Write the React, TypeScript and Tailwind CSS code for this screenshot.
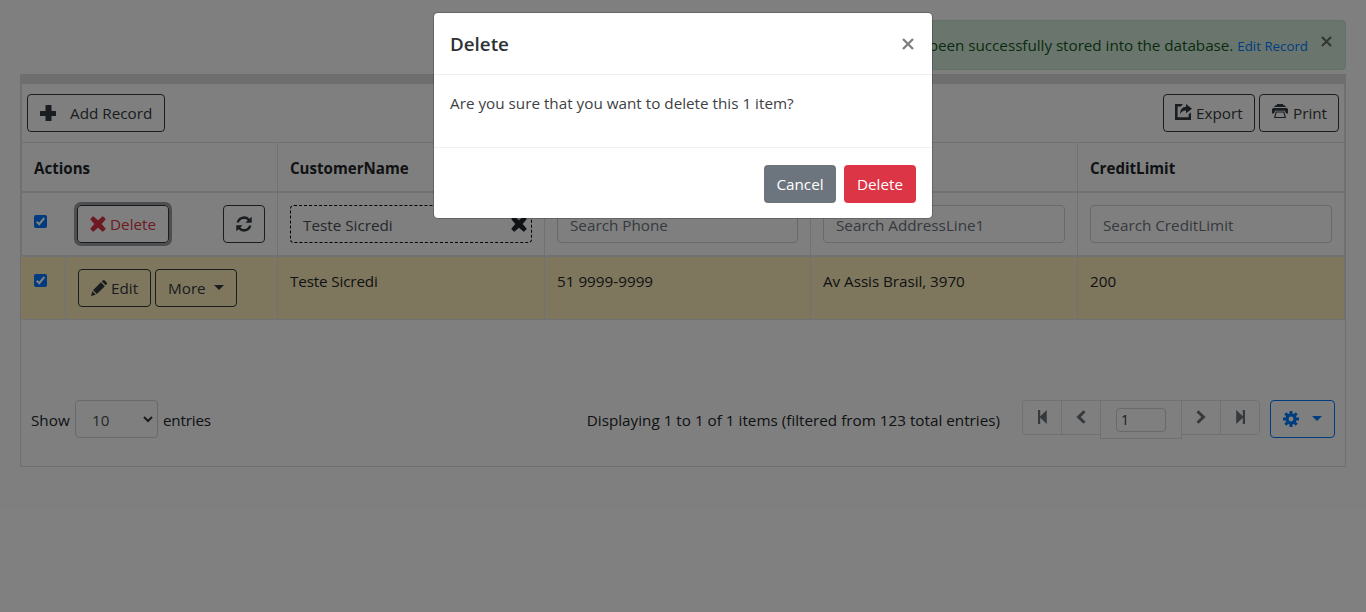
import React from "react";

type IconProps = { className?: string };

const PlusIcon = ({ className = "" }: IconProps) => (
  <svg viewBox="0 0 16 16" className={"size-4 shrink-0 " + className} fill="currentColor">
    <path d="M6 0h5a.5.5 0 0 1 .5.5V6H15.500a.5.5 0 0 1 .5.5v4a.5.5 0 0 1-.5.5H11.500v4.500a.5.5 0 0 1-.5.5H6a.5.5 0 0 1-.5-.5V11H.5a.5.5 0 0 1-.5-.5v-4A.5.5 0 0 1 .5 6h5V.5A.5.5 0 0 1 6 0z" />
  </svg>
);
const RemoveIcon = ({ className = "" }: IconProps) => (
  <svg viewBox="0 0 16 16" className={"size-4 shrink-0 " + className} fill="currentColor">
    <path d="M3.600.5 8 4.300 12.400.5q.4-.4.8 0l2.300 2.300q.4.4 0 .8L11.700 8l3.800 4.400q.4.4 0 .8l-2.300 2.300q-.4.4-.8 0L8 11.700l-4.400 3.800q-.4.4-.8 0L.5 13.200q-.4-.4 0-.8L4.300 8 .5 3.600q-.4-.4 0-.8L2.800.5q.4-.4.8 0z" />
  </svg>
);
const RefreshIcon = () => (
  <svg viewBox="0 0 16 16" className="size-4 shrink-0" fill="currentColor">
    <path d="M.6 6.500A7.600 7.600 0 0 1 13.500 2.700L15.700.8V6.700H9.400l2.300-2.300A5.300 5.300 0 0 0 3 6.500z" />
    <path d="M15.400 9.500A7.600 7.600 0 0 1 2.500 13.300L.3 15.200V9.300h6.300l-2.300 2.300A5.300 5.300 0 0 0 13 9.500z" />
  </svg>
);
const PencilIcon = () => (
  <svg viewBox="0 0 16 16" className="size-4 shrink-0" fill="currentColor">
    <path d="M0 16l1.300-4.700 3.500 3.500zM2 10.200 9.900 2.300l3.900 3.900-7.900 7.900zM10.800 1.500l1-1q.9-.9 1.900 0l2 2q.8.900 0 1.800l-1 1z" />
  </svg>
);
const ExportIcon = () => (
  <svg viewBox="0 0 17 16" className="h-4 w-[17px] shrink-0" fill="currentColor">
    <path d="M0 0h8L5.800 2.600H2.600v10.700h11V10.400L16 8.300V16H0z" />
    <path d="M11 0l6 4.700-6 4.600V6.500C8.200 6.400 6.300 7.500 5 10.200 5.200 5.600 7.300 3 11 2.800z" />
  </svg>
);
const PrintIcon = () => (
  <svg viewBox="0 0 16 16" className="size-4 shrink-0" fill="currentColor">
    <path d="M5 0h6l.6 1.500h1.400L14 3H2l1-1.500h1.400z" />
    <path d="M1.500 4h13q1.500 0 1.500 1.500V9.500h-1.900L12.900 6.700H3.100L1.900 9.500H0V5.500Q0 4 1.500 4z" />
    <path d="M3.700 7.500h8.600l1.700 6.500H2zM4.600 8.500l-1.200 4.400h9.200l-1.200-4.400z" fillRule="evenodd" />
  </svg>
);
const CogIcon = () => (
  <svg viewBox="0 0 16 16" className="size-4 shrink-0">
    <g stroke="currentColor" strokeWidth="3">
      <path d="M8 0v16M0 8h16M2.300 2.300l11.400 11.400M2.300 13.700 13.700 2.300" />
    </g>
    <circle cx="8" cy="8" r="5.700" fill="currentColor" />
    <circle cx="8" cy="8" r="2.400" fill="#fff" />
  </svg>
);
const StepIcon = ({ className = "" }: IconProps) => (
  <svg viewBox="0 0 9 14" className={"mb-0.5 h-3.5 w-[9px] " + className} fill="currentColor">
    <path d="M0 0h2.200v6.200L8.800 0v14L2.200 7.800V14H0z" />
  </svg>
);
const ChevronIcon = ({ className = "" }: IconProps) => (
  <svg viewBox="0 0 10 14" className={"mb-0.5 h-3.5 w-2.5 " + className} fill="none" stroke="currentColor" strokeWidth="3">
    <path d="M8.500 1.200 2.600 7l5.900 5.800" />
  </svg>
);
const Caret = ({ className = "" }: IconProps) => (
  <span className={"inline-block border-x-[5px] border-t-[5px] border-x-transparent border-t-current " + className} />
);

const btn =
  "flex h-[38px] shrink-0 items-center rounded-[4px] border border-[#343a40] text-[#343a40] whitespace-nowrap";
const cell = "border-r border-[#dee2e6]";
const columns = "grid grid-cols-[257px_267px_266px_267px_267px]";

const Check = () => (
  <span className="flex size-[13px] shrink-0 items-center justify-center rounded-[2px] bg-[#0075ff]">
    <svg viewBox="0 0 13 13" className="size-[13px]" fill="none" stroke="#fff" strokeWidth="2">
      <path d="M2.700 6.700 5.200 9.200 10.300 3" />
    </svg>
  </span>
);

const SearchBox = ({ label }: { label: string }) => (
  <div className="flex h-[38px] items-center rounded-[4px] border border-[#ced4da] px-3 pt-0.5 text-[#6c757d]">{label}</div>
);

function Grid() {
  return (
    <div className="h-[393px] border border-t-0 border-[#dfdfe0]">
      <div className="-mx-px h-2.5 bg-[#ddd]" />
      <div className="flex h-[58px] items-start border-x border-[#dee2e6] px-[5px] pt-2.5">
        <div className={btn + " w-[138px] px-3"}>
          <PlusIcon />
          <span className="pl-3.5">Add Record</span>
        </div>
        <div className={btn + " ml-auto w-[92px] gap-1 pl-[11px]"}>
          <span className="-mt-0.5"><ExportIcon /></span>
          <span>Export</span>
        </div>
        <div className={btn + " ml-1 w-20 gap-[5px] pl-3"}>
          <span className="-mt-0.5"><PrintIcon /></span>
          <span>Print</span>
        </div>
      </div>

      <div className="border-l border-[#dee2e6]">
        <div className={columns + " -ml-px h-[51px] border-y border-b-2 border-[#dee2e6] text-[15.100px] font-bold text-[#212529]"}>
          <div className={cell + " pt-[13px] pl-[13px]"}>Actions</div>
          <div className={cell + " pt-[13px] pl-3"}>CustomerName</div>
          <div className={cell + " pt-[13px] pl-3"}>Phone</div>
          <div className={cell} />
          <div className={cell + " pt-[13px] pl-3"}>CreditLimit</div>
        </div>

        <div className={columns + " -ml-px h-16 border-b-2 border-[#dee2e6]"}>
          <div className={cell + " flex items-start pt-3 pr-3 pl-[13px]"}>
            <span className="pt-2.5"><Check /></span>
            <div className={btn + " ml-[30px] w-[92px] pl-3 ring-[3px] ring-[#343a40]/50"}>
              <RemoveIcon className="text-[#dc3545]" />
              <span className="pl-1 text-[#dc3545]">Delete</span>
            </div>
            <div className={btn + " ml-auto w-[42px] justify-center"}>
              <RefreshIcon />
            </div>
          </div>
          <div className={cell + " px-3 pt-3"}>
            <div className="flex h-[38px] items-center justify-between rounded-[4px] border border-dashed border-black pr-1 pl-3 text-[#495057]">
              <span className="pt-0.5">Teste Sicredi</span>
              <RemoveIcon className="text-[#212529]" />
            </div>
          </div>
          <div className={cell + " px-3 pt-3"}><SearchBox label="Search Phone" /></div>
          <div className={cell + " px-3 pt-3"}><SearchBox label="Search AddressLine1" /></div>
          <div className={cell + " px-3 pt-3"}><SearchBox label="Search CreditLimit" /></div>
        </div>

        <div className={columns + " -ml-px h-[63px] border-b border-[#dee2e6] bg-[#ffeeba] text-[#212529]"}>
          <div className={cell + " flex"}>
            <div className="w-[45px] border-r border-[#dee2e6] pt-[17px] pl-[13px]"><Check /></div>
            <div className="flex items-start gap-1 pt-3 pl-3">
              <div className={btn + " w-[73px] gap-1 pl-3"}>
                <PencilIcon />
                <span>Edit</span>
              </div>
              <div className={btn + " w-[82px] pl-3"}>
                <span>More</span>
                <Caret className="mb-0.5 ml-2" />
              </div>
            </div>
          </div>
          <div className={cell + " pt-3 pl-3"}><span className="tracking-[-0.15px]">Teste Sicredi</span></div>
          <div className={cell + " pt-3 pl-3"}>51 9999-9999</div>
          <div className={cell + " pt-3 pl-3"}><span className="tracking-[-0.05px]">Av Assis Brasil, 3970</span></div>
          <div className={cell + " pt-3 pl-3"}>200</div>
        </div>
      </div>

      <div className="flex items-start pt-20 pr-2.5 pl-2.5 text-[#212529]">
        <span className="w-[44px] pt-2">Show</span>
        <div className="flex h-[38px] w-[83px] items-center justify-between rounded-[4px] border border-[#ced4da] pr-1 pl-4 text-[#495057]">
          <span className="pt-0.5">10</span>
          <svg viewBox="0 0 10 7" className="h-[7px] w-2.5" fill="none" stroke="#343a40" strokeWidth="2">
            <path d="M1 1l4 4 4-4" />
          </svg>
        </div>
        <span className="pt-2 pl-[5px] tracking-[-0.2px]">entries</span>
        <span className="ml-auto pt-2 whitespace-nowrap">Displaying 1 to 1 of 1 items (filtered from 123 total entries)</span>
        <div className="ml-[22px] flex items-start text-[#6c757d]">
          <div className="flex h-[35px] w-10 items-center justify-center rounded-l-[4px] border border-[#dee2e6]"><StepIcon /></div>
          <div className="-ml-px flex h-[35px] w-10 items-center justify-center border border-[#dee2e6]"><ChevronIcon /></div>
          <div className="-ml-px flex h-[39px] w-[82px] items-center justify-center border border-[#dee2e6]">
            <div className="flex h-6 w-[50px] items-center rounded-[4px] border border-[#ced4da] pl-1 text-[14px] text-[#343a40]">1</div>
          </div>
          <div className="-ml-px flex h-[35px] w-10 items-center justify-center border border-[#dee2e6]"><ChevronIcon className="rotate-180" /></div>
          <div className="-ml-px flex h-[35px] w-10 items-center justify-center rounded-r-[4px] border border-[#dee2e6]"><StepIcon className="rotate-180" /></div>
        </div>
        <div className="ml-2.5 flex h-[38px] w-[65px] items-center rounded-[4px] border border-[#007bff] pl-3 text-[#007bff]">
          <CogIcon />
          <Caret className="mb-0.5 ml-[13px]" />
        </div>
      </div>
    </div>
  );
}

export default function App() {
  return (
    <div className="relative h-[612px] w-full overflow-hidden bg-white font-['Open_Sans',sans-serif] text-[15.250px] leading-6">
      <div className="flex h-[74px] justify-end px-5 pt-5">
        <div className="flex h-[50px] w-[540px] items-start justify-end rounded-[4px] border border-[#c3e6cb] bg-[#d4edda] pt-3 pr-[13px] whitespace-nowrap text-[#155724]">
          <span className="tracking-[-0.04px]">Record has been successfully stored into the database.</span>
          <span className="ml-1 pt-px text-[13.300px] text-[#007bff]">Edit Record</span>
          <svg viewBox="0 0 12 12" className="mt-[3px] ml-[13px] size-[11px]" stroke="#666" strokeWidth="2.200">
            <path d="M1 1l10 10M11 1 1 11" />
          </svg>
        </div>
      </div>
      <div className="px-5">
        <Grid />
      </div>

      <div className="absolute inset-0 flex items-start justify-center bg-black/50 pt-3">
        <div className="flex h-[207px] w-[500px] flex-col rounded-[5px] border border-black/20 bg-white bg-clip-padding text-[#212529]">
          <div className="flex h-[62px] shrink-0 items-center justify-between border-b border-[#eef0f2] pr-[18px] pl-4">
            <span className="pt-px text-[18.800px] font-semibold text-[#2d3135]">Delete</span>
            <svg viewBox="0 0 12 12" className="size-3" stroke="#808080" strokeWidth="2.400">
              <path d="M1 1l10 10M11 1 1 11" />
            </svg>
          </div>
          <div className="h-[73px] shrink-0 border-b border-[#eef0f2] px-4 pt-4 text-[#3e4144]">Are you sure that you want to delete this 1 item?</div>
          <div className="flex flex-1 items-center justify-end gap-2 px-4 pt-px text-white">
            <div className="flex h-[38px] w-[72px] items-center justify-center rounded-[4px] bg-[#6c757d]">Cancel</div>
            <div className="flex h-[38px] w-[72px] items-center justify-center rounded-[4px] bg-[#dc3545]">Delete</div>
          </div>
        </div>
      </div>
    </div>
  );
}
